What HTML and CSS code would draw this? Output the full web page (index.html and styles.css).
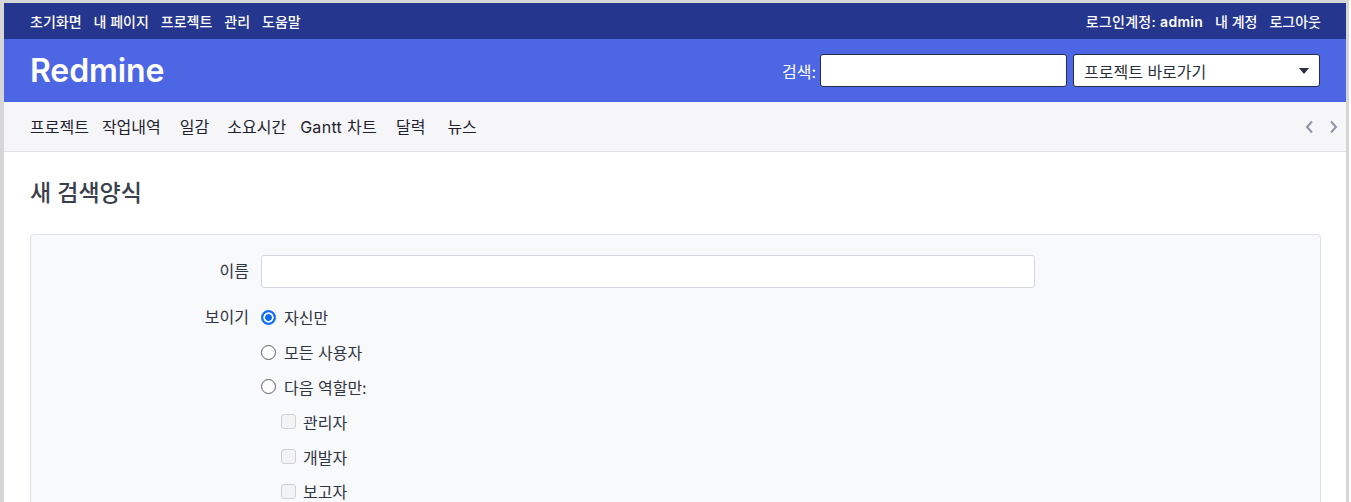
FILE: index.html
```html
<!DOCTYPE html>
<html lang="ko">
<head>
<meta charset="utf-8">
<title>새 검색양식 - Redmine</title>
<link rel="stylesheet" href="styles.css">
</head>
<body>
<div class="frame">
  <div class="top-menu">
    <ul class="top-left">
      <li><a href="#">초기화면</a></li>
      <li><a href="#">내 페이지</a></li>
      <li><a href="#">프로젝트</a></li>
      <li><a href="#">관리</a></li>
      <li><a href="#">도움말</a></li>
    </ul>
    <div class="top-right">
      <span class="loggedas">로그인계정: <a href="#" class="user">admin</a></span>
      <a href="#">내 계정</a>
      <a href="#">로그아웃</a>
    </div>
  </div>

  <div class="header">
    <h1 class="logo">Redmine</h1>
    <div class="quick-search">
      <label class="search-label" for="q">검색:</label>
      <input id="q" class="search-input" type="text">
      <div class="jump">
        <span class="jump-text">프로젝트 바로가기</span>
        <svg class="jump-arrow" width="10" height="6" viewBox="0 0 10 6"><path d="M0 0h10L5 6z" fill="#2b2f3a"/></svg>
      </div>
    </div>
  </div>

  <div class="main-menu">
    <ul class="tabs">
      <li class="t1"><a href="#">프로젝트</a></li>
      <li class="t2"><a href="#">작업내역</a></li>
      <li class="t3"><a href="#">일감</a></li>
      <li class="t4"><a href="#">소요시간</a></li>
      <li class="t5"><a href="#">Gantt 차트</a></li>
      <li class="t6"><a href="#">달력</a></li>
      <li class="t7"><a href="#">뉴스</a></li>
    </ul>
    <div class="tab-arrows">
      <svg width="9" height="14" viewBox="0 0 9 14"><path d="M7 1.5L2 7l5 5.5" fill="none" stroke="#8c95a8" stroke-width="2"/></svg>
      <svg width="9" height="14" viewBox="0 0 9 14"><path d="M2 1.5L7 7l-5 5.5" fill="none" stroke="#8c95a8" stroke-width="2"/></svg>
    </div>
  </div>

  <div class="content">
    <h2 class="title">새 검색양식</h2>
    <div class="box">
      <label class="field-label" for="name">이름</label>
      <div class="field"><input id="name" class="name-input" type="text"></div>

      <div class="field-label vis">보이기</div>
      <div class="field options">
        <label class="opt"><input type="radio" name="v" class="radio" checked> 자신만</label>
        <label class="opt"><input type="radio" name="v" class="radio"> 모든 사용자</label>
        <label class="opt"><input type="radio" name="v" class="radio"> 다음 역할만:</label>
        <label class="opt sub"><input type="checkbox" class="check" disabled> 관리자</label>
        <label class="opt sub"><input type="checkbox" class="check" disabled> 개발자</label>
        <label class="opt sub"><input type="checkbox" class="check" disabled> 보고자</label>
      </div>
    </div>
  </div>
</div>
</body>
</html>
```

FILE: styles.css
```css
* { box-sizing: border-box; }
html, body { margin: 0; padding: 0; background: #fff; }
body {
  font-family: Inter, "Noto Sans CJK KR", sans-serif;
  color: #2b2f3a;
  overflow: hidden;
}
a { text-decoration: none; color: inherit; }
ul { list-style: none; margin: 0; padding: 0; }

.frame {
  width: 1349px;
  height: 502px;
  overflow: hidden;
  border-style: solid;
  border-color: #d6d6d8;
  border-width: 3px 3px 0 4px;
  background: #fff;
}

/* top menu */
.top-menu {
  height: 36px;
  background: #25368e;
  color: #fff;
  display: flex;
  align-items: center;
  justify-content: space-between;
  padding: 0 25px 0 26px;
  font-size: 14px;
  font-weight: 500;
}
.top-left { display: flex; gap: 12px; }
.top-right { display: flex; gap: 12px; }
.loggedas { letter-spacing: 0.02em; }
.user { font-weight: 600; letter-spacing: 0.02em; }

/* header */
.header {
  height: 63px;
  background: #4d66e3;
  display: flex;
  align-items: center;
  justify-content: space-between;
  padding: 0 26px 0 26px;
}
.logo {
  margin: 0;
  color: #fff;
  font-size: 32px;
  font-weight: 600;
  letter-spacing: -0.1px;
  line-height: 1;
  padding-top: 1px;
}
.quick-search { display: flex; align-items: center; }
.search-label { color: #fff; font-size: 16px; margin-right: 4px; }
.search-input {
  width: 247px;
  height: 33px;
  border: 1px solid #262b48;
  border-radius: 3px;
  background: #fff;
  margin: 0 6px 0 0;
  padding: 0 8px;
}
.jump {
  width: 247px;
  height: 33px;
  border: 1px solid #262b48;
  border-radius: 3px;
  background: #fff;
  display: flex;
  align-items: center;
  justify-content: space-between;
  padding: 0 10px 0 10px;
  font-size: 16px;
  color: #2b2f3a;
}

/* main menu */
.main-menu {
  height: 50px;
  background: #f6f6f8;
  border-bottom: 1px solid #dfe0e6;
  display: flex;
  align-items: center;
  justify-content: space-between;
  padding: 0 8px 1px 26px;
  font-size: 16px;
  color: #1e2230;
}
.tabs { display: flex; }
.t2 { margin-left: 13px; }
.t3 { margin-left: 19px; }
.t4 { margin-left: 18px; }
.t5 { margin-left: 14px; letter-spacing: 0.3px; }
.t6 { margin-left: 19px; }
.t7 { margin-left: 22px; }
.tab-arrows { display: flex; gap: 15px; padding-top: 2px; }

/* content */
.content { padding: 0 25px 0 26px; }
.title {
  margin: 27px 0 0 0;
  font-size: 23px;
  font-weight: 500;
  line-height: 28px;
  color: #3a3f4c;
}
.box {
  margin-top: 27px;
  background: #f8f9fb;
  border: 1px solid #dfe1e8;
  border-radius: 4px;
  padding: 20px 0 20px 0;
  display: grid;
  grid-template-columns: 218px 1fr;
  column-gap: 12px;
  row-gap: 12px;
  font-size: 16px;
  color: #2f3442;
}
.field-label {
  text-align: right;
  line-height: 33px;
}
.field-label.vis { line-height: 35px; }
.name-input {
  display: block;
  width: 774px;
  height: 33px;
  border: 1px solid #d3d6df;
  border-radius: 3px;
  background: #fff;
  margin: 0;
}
.options { display: flex; flex-direction: column; }
.opt {
  height: 34.8px;
  display: flex;
  align-items: center;
  gap: 8px;
}
.opt.sub { padding-left: 20px; gap: 7px; }
.radio {
  appearance: none;
  -webkit-appearance: none;
  margin: 0;
  width: 15px;
  height: 15px;
  border-radius: 50%;
  border: 1.5px solid #5a5d66;
  background: #fff;
}
.radio:checked {
  border: 1px solid #0b6cf2;
  background: radial-gradient(circle, #0b6cf2 0 3px, #fff 3.8px 4.8px, #0b6cf2 5.5px);
}
.check {
  appearance: none;
  -webkit-appearance: none;
  margin: 0;
  width: 15px;
  height: 15px;
  border-radius: 3px;
  border: 1px solid #cfd0d4;
  background: #f3f3f4;
}
```
